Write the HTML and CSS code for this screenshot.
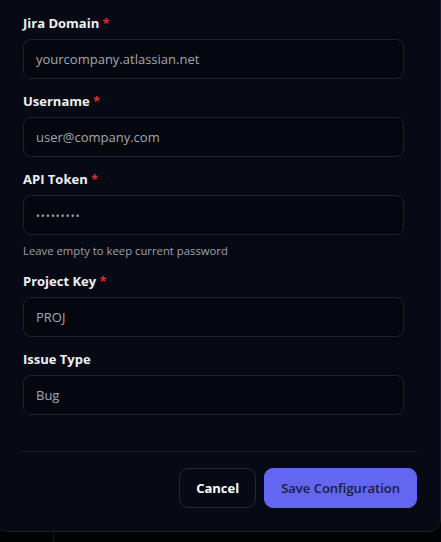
FILE: index.html
```html
<!DOCTYPE html>
<html lang="en">
<head>
<meta charset="utf-8">
<title>Jira Configuration</title>
<link rel="stylesheet" href="styles.css">
</head>
<body>
<div class="modal">
  <form class="form">
    <div class="field">
      <label class="label">Jira Domain <span class="req">*</span></label>
      <input class="input" type="text" placeholder="yourcompany.atlassian.net">
    </div>
    <div class="field">
      <label class="label">Username <span class="req">*</span></label>
      <input class="input" type="text" placeholder="user@company.com">
    </div>
    <div class="field">
      <label class="label">API Token <span class="req">*</span></label>
      <input class="input input-pw" type="text" placeholder="•••••••••">
      <p class="help">Leave empty to keep current password</p>
    </div>
    <div class="field">
      <label class="label">Project Key <span class="req">*</span></label>
      <input class="input" type="text" placeholder="PROJ">
    </div>
    <div class="field">
      <label class="label">Issue Type</label>
      <input class="input" type="text" placeholder="Bug">
    </div>
  </form>
  <div class="footer">
    <button class="btn btn-cancel" type="button">Cancel</button>
    <button class="btn btn-save" type="button">Save Configuration</button>
  </div>
</div>
<div class="behind"></div>
</body>
</html>
```

FILE: styles.css
```css
* { box-sizing: border-box; }

html, body {
  margin: 0;
  padding: 0;
  background: #020305;
  font-family: "Open Sans", "Noto Sans", "Liberation Sans", sans-serif;
  color: #e5e7eb;
  overflow: hidden;
}

.modal {
  margin: -20px 0 0 -5px;
  width: 446px;
  background: #070a14;
  border: 1px solid #1c1f2b;
  border-radius: 12px;
  padding: 32px 23px 23px 23px;
}

.form {
  display: flex;
  flex-direction: column;
  gap: 12px;
  padding: 0 13px 0 4px;
  margin: 0 0 36px 0;
}

.field {
  display: flex;
  flex-direction: column;
}

.label {
  font-size: 13px;
  font-weight: 700;
  line-height: 20px;
  color: #eef0f4;
  margin-bottom: 6px;
}

.req {
  color: #dc2f2f;
}

.input {
  height: 40px;
  width: 100%;
  background: #05070f;
  border: 1px solid #1f2331;
  border-radius: 8px;
  padding: 0 12px;
  font-family: inherit;
  font-size: 13px;
  color: #e5e7eb;
  outline: none;
}

.input::placeholder {
  color: #a3a7b0;
  opacity: 1;
}

.input-pw::placeholder {
  font-size: 10px;
  letter-spacing: 1.2px;
  color: #a9adb5;
}

.help {
  margin: 8px 0 0 0;
  font-size: 11.3px;
  line-height: 16px;
  color: #9ca1ab;
}

.footer {
  border-top: 1px solid #1c1f2b;
  padding-top: 16px;
  display: flex;
  justify-content: flex-end;
  gap: 8px;
}

.btn {
  height: 40px;
  border-radius: 9px;
  padding: 0 16px;
  font-family: inherit;
  font-size: 13px;
  font-weight: 600;
  cursor: pointer;
}

.btn-cancel {
  background: transparent;
  border: 1px solid #232736;
  color: #ffffff;
  font-weight: 700;
}

.btn-save {
  background: #6366f1;
  border: 1px solid #6366f1;
  color: #1b1c3a;
}

.behind {
  margin-left: 53px;
  height: 12px;
  border-left: 1px solid #15171f;
}
```
